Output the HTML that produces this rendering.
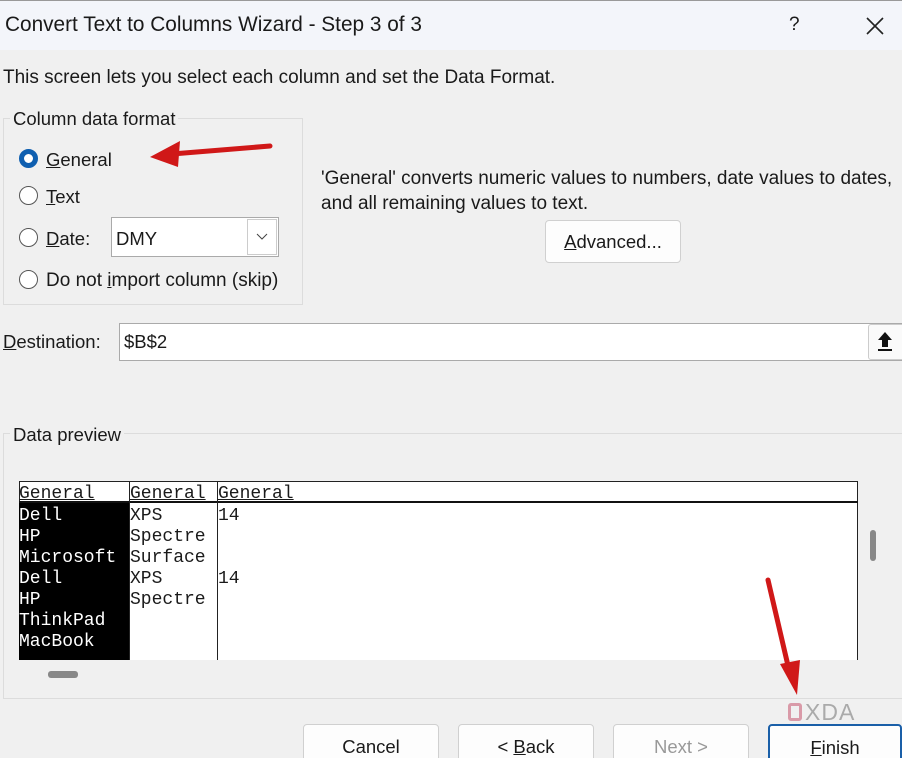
<!DOCTYPE html>
<html style="width:902px;height:758px;overflow:hidden"><head><meta charset="utf-8"><style>
*{box-sizing:border-box;margin:0;padding:0}
body{width:902px;height:758px;overflow:hidden;background:#f0f0f0;font-family:"Liberation Sans",sans-serif;color:#1a1a1a;position:relative}
.a{position:absolute;white-space:nowrap}
.t{font-size:18.5px}
.radio{position:absolute;width:19px;height:19px;border-radius:50%;border:1.5px solid #555;background:#fff}
.btn{position:absolute;background:#fdfdfd;border:1px solid #d0d0d0;border-radius:4px;font-size:18.5px;text-align:center}
.mono{font-family:"Liberation Mono",monospace;font-size:18px;line-height:21px}
u{text-decoration:underline}
</style></head><body>
<div class="a" style="left:0;top:0;width:902px;height:50px;background:#f3f5fa;border-top:1px solid #999"></div>
<div class="a" style="left:5px;top:13px;font-size:20.8px">Convert Text to Columns Wizard - Step 3 of 3</div>
<div class="a" style="left:789px;top:14px;font-size:19px">?</div>
<svg class="a" style="left:866px;top:17px" width="18" height="18"><path d="M1 1L17 17M17 1L1 17" stroke="#222" stroke-width="1.6"/></svg>
<div class="a t" style="left:3px;top:67px;font-size:19px">This screen lets you select each column and set the Data Format.</div>
<div class="a" style="left:3px;top:118px;width:300px;height:187px;border:1px solid #dcdcdc"></div>
<div class="a t" style="left:10px;top:108px;background:#f0f0f0;padding:0 3px">Column data format</div>
<div class="radio" style="left:19px;top:149px;border:5px solid #0f5fb0"></div>
<div class="a t" style="left:46px;top:149px"><u>G</u>eneral</div>
<div class="radio" style="left:19px;top:186px"></div>
<div class="a t" style="left:46px;top:186px"><u>T</u>ext</div>
<div class="radio" style="left:19px;top:228px"></div>
<div class="a t" style="left:46px;top:228px"><u>D</u>ate:</div>
<div class="a" style="left:111px;top:217px;width:168px;height:40px;background:#fff;border:1px solid #aaa"></div>
<div class="a t" style="left:116px;top:228px">DMY</div>
<div class="a" style="left:247px;top:219px;width:30px;height:36px;border:1px solid #ccc;background:#fff"></div>
<svg class="a" style="left:256px;top:233px" width="12" height="8"><path d="M1 1L6 6L11 1" stroke="#444" fill="none"/></svg>
<div class="radio" style="left:19px;top:270px"></div>
<div class="a t" style="left:46px;top:270px;font-size:19px">Do not <u>i</u>mport column (skip)</div>
<div class="a t" style="left:321px;top:166px;line-height:25px;font-size:19px">'General' converts numeric values to numbers, date values to dates,<br>and all remaining values to text.</div>
<div class="btn" style="left:545px;top:220px;width:136px;height:43px;line-height:42px"><u>A</u>dvanced...</div>
<div class="a t" style="left:3px;top:331px"><u>D</u>estination:</div>
<div class="a" style="left:119px;top:323px;width:790px;height:38px;background:#fff;border:1px solid #aaa"></div>
<div class="a t" style="left:124px;top:331px">$B$2</div>
<div class="a" style="left:868px;top:324px;width:40px;height:36px;background:#fafafa;border:1px solid #ccc;border-radius:3px"></div>
<svg class="a" style="left:876px;top:331px" width="18" height="22"><path d="M9 1L2 9H6V16H12V9H16Z" fill="#111"/><rect x="2" y="18" width="14" height="2" fill="#111"/></svg>
<div class="a" style="left:3px;top:433px;width:910px;height:266px;border:1px solid #dcdcdc"></div>
<div class="a t" style="left:10px;top:424px;background:#f0f0f0;padding:0 3px">Data preview</div>
<div class="a" style="left:19px;top:481px;width:839px;height:179px;background:#fff;border:1px solid #222;border-bottom:none"></div>
<div class="a" style="left:19px;top:501px;width:839px;height:2px;background:#111"></div>
<div class="a" style="left:19px;top:503px;width:110px;height:157px;background:#000"></div>
<div class="a" style="left:129px;top:481px;width:1px;height:179px;background:#222"></div>
<div class="a" style="left:217px;top:481px;width:1px;height:179px;background:#222"></div>
<div class="a mono" style="left:19px;top:484px"><u>General</u></div>
<div class="a mono" style="left:130px;top:484px"><u>General</u></div>
<div class="a mono" style="left:218px;top:484px"><u>General</u></div>
<div class="a mono" style="left:19px;top:506px;color:#fff">Dell<br>HP<br>Microsoft<br>Dell<br>HP<br>ThinkPad<br>MacBook</div>
<div class="a mono" style="left:130px;top:506px">XPS<br>Spectre<br>Surface<br>XPS<br>Spectre</div>
<div class="a mono" style="left:218px;top:506px">14<br><br><br>14</div>
<div class="a" style="left:870px;top:530px;width:6px;height:31px;background:#888;border-radius:3px"></div>
<div class="a" style="left:48px;top:671px;width:30px;height:7px;background:#888;border-radius:3px"></div>
<div class="btn" style="left:303px;top:724px;width:136px;height:40px;line-height:44px">Cancel</div>
<div class="btn" style="left:458px;top:724px;width:136px;height:40px;line-height:44px">&lt; <u>B</u>ack</div>
<div class="btn" style="left:613px;top:724px;width:136px;height:40px;line-height:44px;color:#999">Next &gt;</div>
<div class="btn" style="left:768px;top:724px;width:134px;height:40px;line-height:44px;border:2px solid #1a5fa8"><u>F</u>inish</div>
<div class="a" style="left:788px;top:703px;width:14px;height:18px;border:3px solid #d99aa8;border-radius:3px"></div>
<div class="a" style="left:805px;top:699px;font-size:23px;color:#aaa;letter-spacing:1px">XDA</div>
<svg class="a" style="left:0;top:0" width="902" height="758"><path d="M270 146L172 154" stroke="#d01818" stroke-width="5" stroke-linecap="round"/><path d="M150 157L180 141L178 167Z" fill="#d01818"/><path d="M768 580L789 670" stroke="#d01818" stroke-width="5" stroke-linecap="round"/><path d="M797 695L780 664L800 660Z" fill="#d01818"/></svg>
</body></html>
